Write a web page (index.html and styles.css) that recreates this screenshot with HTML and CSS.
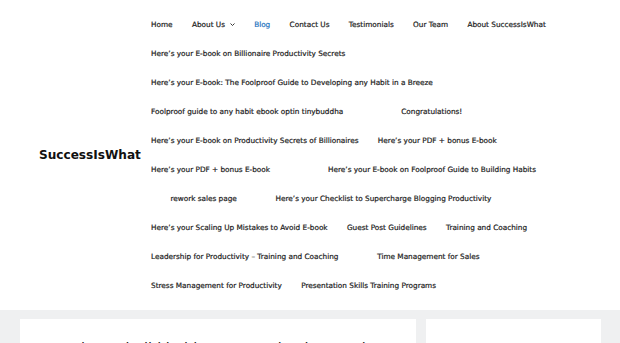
FILE: index.html
```html
<!DOCTYPE html>
<html lang="en">
<head>
<meta charset="utf-8">
<title>SuccessIsWhat</title>
<link rel="stylesheet" href="styles.css">
</head>
<body>
<header class="site-header">
  <div class="header-inner">
    <div class="site-title">SuccessIsWhat</div>
    <nav class="main-nav">
      <ul class="menu">
        <li><a href="#">Home</a></li>
        <li><a href="#">About Us<svg class="caret" viewBox="0 0 10 6" width="5" height="3"><path d="M1 1l4 4 4-4" fill="none" stroke="#222" stroke-width="1.8"/></svg></a></li>
        <li><a class="current" href="#">Blog</a></li>
        <li><a href="#">Contact Us</a></li>
        <li><a href="#">Testimonials</a></li>
        <li><a href="#">Our Team</a></li>
        <li><a href="#">About SuccessIsWhat</a></li>
        <li class="break"></li>
        <li><a href="#">Here’s your E-book on Billionaire Productivity Secrets</a></li>
        <li class="break"></li>
        <li><a href="#">Here’s your E-book: The Foolproof Guide to Developing any Habit in a Breeze</a></li>
        <li class="break"></li>
        <li><a href="#">Foolproof guide to any habit ebook optin tinybuddha</a></li>
        <li class="empty"><a href="#"></a></li>
        <li class="empty"><a href="#"></a></li>
        <li><a href="#">Congratulations!</a></li>
        <li class="break"></li>
        <li><a href="#">Here’s your E-book on Productivity Secrets of Billionaires</a></li>
        <li><a href="#">Here’s your PDF + bonus E-book</a></li>
        <li class="break"></li>
        <li><a href="#">Here’s your PDF + bonus E-book</a></li>
        <li class="empty"><a href="#"></a></li>
        <li class="empty"><a href="#"></a></li>
        <li><a href="#">Here’s your E-book on Foolproof Guide to Building Habits</a></li>
        <li class="break"></li>
        <li class="empty"><a href="#"></a></li>
        <li><a href="#">rework sales page</a></li>
        <li class="empty"><a href="#"></a></li>
        <li><a href="#">Here’s your Checklist to Supercharge Blogging Productivity</a></li>
        <li class="break"></li>
        <li><a href="#">Here’s your Scaling Up Mistakes to Avoid E-book</a></li>
        <li><a href="#">Guest Post Guidelines</a></li>
        <li><a href="#">Training and Coaching</a></li>
        <li class="break"></li>
        <li><a href="#">Leadership for Productivity – Training and Coaching</a></li>
        <li class="empty"><a href="#"></a></li>
        <li><a href="#">Time Management for Sales</a></li>
        <li class="break"></li>
        <li><a href="#">Stress Management for Productivity</a></li>
        <li><a href="#">Presentation Skills Training Programs</a></li>
      </ul>
    </nav>
  </div>
</header>
<div class="site-content">
  <main class="content-card">
    <h2 class="entry-title">Four tips to build habits as a Productive Leader</h2>
  </main>
  <aside class="sidebar-card">
    <a class="widget-link" href="#">“Illustrated</a>
  </aside>
</div>
</body>
</html>
```
FILE: styles.css
```css
html, body {
  margin: 0;
  padding: 0;
}
body {
  background: #eff0f1;
  font-family: "DejaVu Sans", sans-serif;
  color: #222;
  overflow: hidden;
}
.site-header {
  background: #fff;
}
.header-inner {
  width: 542px;
  margin: 0 auto;
  padding: 9.7px 19.4px;
  display: flex;
  align-items: center;
  box-sizing: content-box;
}
.site-title {
  font-weight: bold;
  font-size: 12.1px;
  color: #111;
  line-height: 1;
  white-space: nowrap;
}
.main-nav {
  flex: 1;
  margin-left: 0.5px;
}
.menu {
  list-style: none;
  margin: 0;
  padding: 0;
  display: flex;
  flex-wrap: wrap;
}
.menu li {
  display: block;
}
.menu a {
  display: flex;
  align-items: center;
  padding: 0 9.68px;
  line-height: 29.04px;
  height: 29.04px;
  font-size: 7.3px;
  font-weight: 500;
  color: #222;
  text-decoration: none;
  white-space: nowrap;
  -webkit-text-stroke: 0.2px #222;
}
.menu a.current {
  color: #1e73be;
  -webkit-text-stroke: 0.2px #1e73be;
}
.menu .empty a {
  width: 0;
}
.menu .break {
  flex-basis: 100%;
  height: 0;
}
.caret {
  margin-left: 4.8px;
  margin-top: 1px;
}
.site-content {
  width: 581px;
  margin: 0 auto;
  padding-top: 9.7px;
  display: flex;
  gap: 10px;
}
.content-card {
  background: #fff;
  width: 396.5px;
  height: 60px;
  padding: 21px 19.4px 0;
  box-sizing: border-box;
}
.entry-title {
  margin: 0;
  font-size: 14.5px;
  font-weight: normal;
  color: #222;
  white-space: nowrap;
}
.sidebar-card {
  background: #fff;
  flex: 1;
  height: 60px;
  padding: 19px 19.4px 0;
  box-sizing: border-box;
}
.widget-link {
  color: #1e73be;
  font-size: 12px;
  text-decoration: none;
}
```
